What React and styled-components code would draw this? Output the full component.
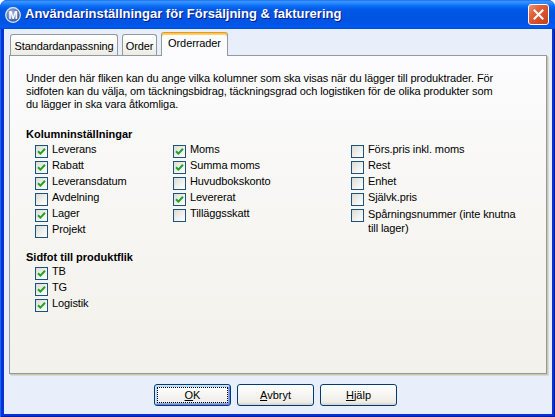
import React from 'react';
import styled, { createGlobalStyle } from 'styled-components';

const Global = createGlobalStyle`
  html, body { margin: 0; padding: 0; background: #ffffff; }
  body { font-family: "Liberation Sans", Arial, sans-serif; font-size: 11px; color: #000; }
  * { box-sizing: border-box; }
`;

const Window = styled.div`
  width: 555px;
  height: 417px;
  display: flex;
  flex-direction: column;
  border-radius: 7px 7px 0 0;
  overflow: hidden;
  background: #0831d9;
`;

const TitleBar = styled.div`
  height: 29px;
  flex: none;
  display: flex;
  align-items: center;
  padding: 0 6px 0 5px;
  background: linear-gradient(
    to bottom,
    #0a5fe0 0px,
    #3d95ff 1px,
    #2e8bff 3px,
    #0a6cf5 6px,
    #0058e6 10px,
    #0054e2 18px,
    #0055e8 24px,
    #005cf3 27px,
    #0049d0 29px
  );
`;

const TitleText = styled.div`
  flex: 1;
  margin-left: 4px;
  color: #fff;
  font-weight: bold;
  font-size: 13px;
  line-height: 16px;
  white-space: nowrap;
  text-shadow: 1px 1px 0 #0a1883;
  padding-bottom: 1px;
`;

const CloseButton = styled.div`
  width: 21px;
  height: 21px;
  border: 1px solid #ffffff;
  border-radius: 3px;
  background: linear-gradient(135deg, #eb9474 0%, #e0603a 35%, #d24c26 70%, #c2411d 100%);
  display: flex;
  align-items: center;
  justify-content: center;
`;

const Frame = styled.div`
  flex: 1;
  display: flex;
  padding: 0 3px 3px 4px;
  background: #0831d9;
  box-shadow: inset 1px 0 0 #166aee, inset -1px 0 0 #001ea0, inset 0 -1px 0 #001ea0;
`;

const Client = styled.div`
  flex: 1;
  display: flex;
  flex-direction: column;
  background: #e8eefa;
  padding: 3px 5px 0 5px;
`;

const TabRow = styled.div`
  height: 23px;
  flex: none;
  display: flex;
  align-items: flex-end;
  gap: 4px;
  padding-left: 1px;
`;

const Tab = styled.div`
  width: ${(p) => p.$w}px;
  height: ${(p) => (p.$active ? 24 : 21)}px;
  margin-bottom: ${(p) => (p.$active ? -1 : 0)}px;
  position: relative;
  z-index: ${(p) => (p.$active ? 1 : 0)};
  border: 1px solid #919b9c;
  border-bottom: none;
  border-top-color: ${(p) => (p.$active ? '#e3982d' : '#919b9c')};
  border-radius: 3px 3px 0 0;
  background: ${(p) =>
    p.$active ? '#fcfcfe' : 'linear-gradient(to bottom, #ffffff 0%, #f7f7f4 50%, #ecebe5 100%)'};
  box-shadow: ${(p) => (p.$active ? 'inset 0 1px 0 #ffc845, inset 0 2px 0 #ffd36b' : 'none')};
  padding-top: ${(p) => (p.$active ? 4 : 5)}px;
  text-align: center;
  line-height: 13px;
  letter-spacing: -0.1px;
  white-space: nowrap;
`;

const Panel = styled.div`
  height: 319px;
  flex: none;
  border: 1px solid #919b9c;
  background: linear-gradient(to bottom, #fcfcfe 0%, #f6f5f1 60%, #f3f1eb 100%);
  box-shadow: 1px 1px 0 #c9c6b6, 2px 2px 0 #dedbcc;
  padding: 16px 16px;
`;

const Intro = styled.p`
  margin: 0;
  line-height: 13px;
  letter-spacing: -0.1px;
  white-space: nowrap;
`;

const Heading = styled.div`
  margin-top: ${(p) => p.$mt}px;
  font-weight: bold;
  line-height: 13px;
`;

const Columns = styled.div`
  display: flex;
  margin: ${(p) => p.$mt}px 0 0 9px;
`;

const Column = styled.div`
  width: ${(p) => (p.$w ? `${p.$w}px` : 'auto')};
  display: flex;
  flex-direction: column;
`;

const Row = styled.div`
  display: flex;
  align-items: flex-start;
  min-height: 16px;
`;

const Box = styled.span`
  width: 13px;
  height: 13px;
  flex: none;
  margin: 2px 4px 0 0;
  border: 1px solid #1c5180;
  background: linear-gradient(135deg, #dcdcd7 0%, #f0f0ec 55%, #ffffff 100%);
  display: flex;
  align-items: center;
  justify-content: center;
`;

const Label = styled.span`
  line-height: ${(p) => (p.$multi ? 14 : 13)}px;
  letter-spacing: -0.1px;
  white-space: nowrap;
`;

const ButtonRow = styled.div`
  flex: 1;
  display: flex;
  align-items: center;
  justify-content: center;
  gap: 6px;
  padding: 1px 5px 0 0;
`;

const Button = styled.button`
  width: 77px;
  height: 22px;
  padding: 0;
  font-family: "Liberation Sans", Arial, sans-serif;
  font-size: 11px;
  color: #000;
  border: 1px solid #003c74;
  border-radius: 3px;
  background: linear-gradient(to bottom, #ffffff 0%, #f7f7f4 40%, #eeede7 85%, #d8d2c6 100%);
  box-shadow: ${(p) =>
    p.$default
      ? 'inset 1px 1px 0 #cee7ff, inset -1px -1px 0 #6982ee, inset 2px 2px 0 #bcd4f6, inset -2px -2px 0 #89ade4'
      : 'none'};
  outline: ${(p) => (p.$default ? '1px dotted #000' : 'none')};
  outline-offset: -4px;
`;

const Check = () => (
  <svg width="9" height="9" viewBox="0 0 9 9">
    <polyline points="1,4.2 3.4,6.6 8,1.8" fill="none" stroke="#21a121" strokeWidth="2" />
  </svg>
);

const Item = ({ checked, children, multi }) => (
  <Row>
    <Box>{checked && <Check />}</Box>
    <Label $multi={multi}>{children}</Label>
  </Row>
);

const AppIcon = () => (
  <svg width="16" height="16" viewBox="0 0 16 16">
    <defs>
      <radialGradient id="ig" cx="0.4" cy="0.35" r="0.7">
        <stop offset="0" stopColor="#9fb5e0" />
        <stop offset="1" stopColor="#2f4f98" />
      </radialGradient>
    </defs>
    <circle cx="8" cy="8" r="7.3" fill="url(#ig)" stroke="#e6ecf8" strokeWidth="1.2" />
    <text
      x="8"
      y="12"
      textAnchor="middle"
      fontFamily="Liberation Sans, Arial, sans-serif"
      fontWeight="bold"
      fontSize="11"
      fill="#ffffff"
    >
      M
    </text>
  </svg>
);

const CloseX = () => (
  <svg width="11" height="11" viewBox="0 0 11 11">
    <path d="M1.5 1.5 L9.5 9.5 M9.5 1.5 L1.5 9.5" stroke="#fff" strokeWidth="2" strokeLinecap="square" />
  </svg>
);

export default function App() {
  return (
    <>
      <Global />
      <Window>
        <TitleBar>
          <AppIcon />
          <TitleText>Användarinställningar för Försäljning &amp; fakturering</TitleText>
          <CloseButton>
            <CloseX />
          </CloseButton>
        </TitleBar>
        <Frame>
          <Client>
            <TabRow>
              <Tab $w={108}>Standardanpassning</Tab>
              <Tab $w={35}>Order</Tab>
              <Tab $w={67} $active>
                Orderrader
              </Tab>
            </TabRow>
            <Panel>
              <Intro>
                Under den här fliken kan du ange vilka kolumner som ska visas när du lägger till produktrader. För
                <br />
                sidfoten kan du välja, om täckningsbidrag, täckningsgrad och logistiken för de olika produkter som
                <br />
                du lägger in ska vara åtkomliga.
              </Intro>
              <Heading $mt={17}>Kolumninställningar</Heading>
              <Columns $mt={2}>
                <Column $w={138}>
                  <Item checked>Leverans</Item>
                  <Item checked>Rabatt</Item>
                  <Item checked>Leveransdatum</Item>
                  <Item>Avdelning</Item>
                  <Item checked>Lager</Item>
                  <Item>Projekt</Item>
                </Column>
                <Column $w={178}>
                  <Item checked>Moms</Item>
                  <Item checked>Summa moms</Item>
                  <Item>Huvudbokskonto</Item>
                  <Item checked>Levererat</Item>
                  <Item>Tilläggsskatt</Item>
                </Column>
                <Column>
                  <Item>Förs.pris inkl. moms</Item>
                  <Item>Rest</Item>
                  <Item>Enhet</Item>
                  <Item>Självk.pris</Item>
                  <Item multi>
                    Spårningsnummer (inte knutna
                    <br />
                    till lager)
                  </Item>
                </Column>
              </Columns>
              <Heading $mt={12}>Sidfot till produktflik</Heading>
              <Columns $mt={1}>
                <Column>
                  <Item checked>TB</Item>
                  <Item checked>TG</Item>
                  <Item checked>Logistik</Item>
                </Column>
              </Columns>
            </Panel>
            <ButtonRow>
              <Button $default>
                <u>O</u>K
              </Button>
              <Button>
                <u>A</u>vbryt
              </Button>
              <Button>
                <u>H</u>jälp
              </Button>
            </ButtonRow>
          </Client>
        </Frame>
      </Window>
    </>
  );
}
